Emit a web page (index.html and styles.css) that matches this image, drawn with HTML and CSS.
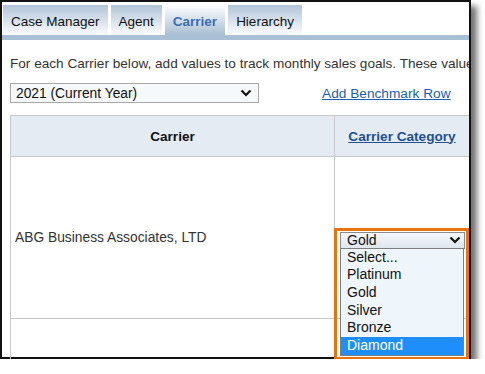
FILE: index.html
```html
<!DOCTYPE html>
<html lang="en">
<head>
    <meta charset="UTF-8">
    <meta name="viewport" content="width=device-width, initial-scale=1.0">
    <title>Carrier Benchmarks</title>
    <link rel="stylesheet" href="styles.css">
</head>
<body>

<div class="shot">
    <div class="tabs">
        <span class="tab">Case Manager</span>
        <span class="tab">Agent</span>
        <span class="tab active">Carrier</span>
        <span class="tab">Hierarchy</span>
    </div>
    <div class="tab-bar"></div>

    <div class="content">
        <p class="intro">For each Carrier below, add values to track monthly sales goals. These values will be used for reporting.</p>

        <div class="toolbar">
            <div class="year-select">
                <span>2021 (Current Year)</span>
                <svg class="chevron" width="12" height="8" viewBox="0 0 12 8"><path d="M1.5 1.5 L6 6 L10.5 1.5" fill="none" stroke="#111" stroke-width="2.2"/></svg>
            </div>
            <a class="add-link" href="#">Add Benchmark Row</a>
        </div>

        <table class="carriers">
            <thead>
                <tr>
                    <th class="col-name">Carrier</th>
                    <th class="col-cat"><a href="#">Carrier Category</a></th>
                    <th class="col-more"></th>
                </tr>
            </thead>
            <tbody>
                <tr class="row-main">
                    <td class="name-cell">ABG Business Associates, LTD</td>
                    <td class="cat-cell">
                        <div class="picker">
                            <div class="picker-select">
                                <span>Gold</span>
                                <svg class="chevron" width="12" height="8" viewBox="0 0 12 8"><path d="M1.5 1.5 L6 6 L10.5 1.5" fill="none" stroke="#111" stroke-width="2.2"/></svg>
                            </div>
                            <ul class="listbox">
                                <li>Select...</li>
                                <li>Platinum</li>
                                <li>Gold</li>
                                <li>Silver</li>
                                <li>Bronze</li>
                                <li class="selected">Diamond</li>
                            </ul>
                            <div class="callout"></div>
                        </div>
                    </td>
                    <td></td>
                </tr>
                <tr class="row-next">
                    <td></td>
                    <td></td>
                    <td></td>
                </tr>
            </tbody>
        </table>
    </div>
</div>

</body>
</html>
```

FILE: styles.css
```css
body {
    margin: 0;
    background-color: #fff;
    font-family: "Liberation Sans", Arial, sans-serif;
    color: #333;
}

.shot {
    width: 467px;
    height: 355px;
    border: 2px solid #111;
    background-color: #fff;
    box-shadow: 6px 6px 6px rgba(0, 0, 0, 0.55);
    overflow-x: clip;
}

/* tabs */

.tabs {
    display: flex;
    gap: 3px;
    height: 30px;
    padding: 3px 0 0 1px;
}

.tab {
    padding: 3px 8px 0;
    line-height: 27px;
    font-size: 13.5px;
    color: #111;
    background: linear-gradient(#b1c4d7, #fbfcfe);
}

.tab.active {
    color: #3b6db3;
    font-weight: bold;
    background: linear-gradient(#fff, #a9bfd3);
}

.tab-bar {
    height: 5px;
    background-color: #a9bfd3;
}

/* content */

.content {
    padding: 16px 0 0 8px;
}

.intro {
    margin: 0;
    font-size: 13.6px;
    line-height: 16px;
    color: #333;
    white-space: nowrap;
}

.toolbar {
    display: flex;
    align-items: center;
    margin-top: 11px;
}

.year-select {
    display: flex;
    align-items: center;
    justify-content: space-between;
    box-sizing: border-box;
    width: 249px;
    height: 20px;
    padding: 0 6px 0 5px;
    border: 1px solid #a8a8a8;
    background-color: #f6f9fc;
    font-size: 13.8px;
    color: #111;
}

.add-link {
    margin-left: 63px;
    font-size: 13.7px;
    color: #1c5eae;
    text-decoration: underline;
}

/* table */

.carriers {
    margin-top: 12px;
    border-collapse: collapse;
    table-layout: fixed;
    width: 600px;
}

.carriers th,
.carriers td {
    border: 1px solid #c8c8c8;
    padding: 0;
}

.carriers th {
    height: 40px;
    background-color: #e4ebf3;
    font-size: 13.6px;
    font-weight: bold;
    color: #111;
}

.col-name {
    width: 323px;
}

.col-cat {
    width: 134px;
}

.col-cat a {
    color: #1f4f8f;
}

.row-main td {
    height: 156px;
}

.row-next td {
    height: 40px;
}

.name-cell {
    padding-left: 4px !important;
    font-size: 13.8px;
    color: #333;
}

.cat-cell {
    padding: 5px 0 0 5px !important;
}

/* open dropdown */

.picker {
    position: relative;
    width: 125px;
}

.picker-select {
    display: flex;
    align-items: center;
    justify-content: space-between;
    box-sizing: border-box;
    height: 17px;
    padding: 0 3px 0 6px;
    border: 1px solid #8c8c8c;
    background: linear-gradient(#f4f7fa, #dfe6ee);
    font-size: 14px;
    color: #111;
}

.listbox {
    position: absolute;
    top: 16px;
    left: 0;
    z-index: 2;
    box-sizing: border-box;
    width: 124px;
    margin: 0;
    padding: 0;
    list-style: none;
    border: 1px solid #7d7d7d;
    background-color: #eef5fb;
}

.listbox li {
    padding-left: 6px;
    height: 17.7px;
    line-height: 17.7px;
    font-size: 14px;
    color: #111;
}

.listbox li.selected {
    background-color: #1e8ffa;
    color: #fff;
}

.callout {
    position: absolute;
    top: -4px;
    left: -6px;
    z-index: 3;
    box-sizing: border-box;
    width: 135px;
    height: 132px;
    border: 3px solid #e8730e;
    pointer-events: none;
}
```
